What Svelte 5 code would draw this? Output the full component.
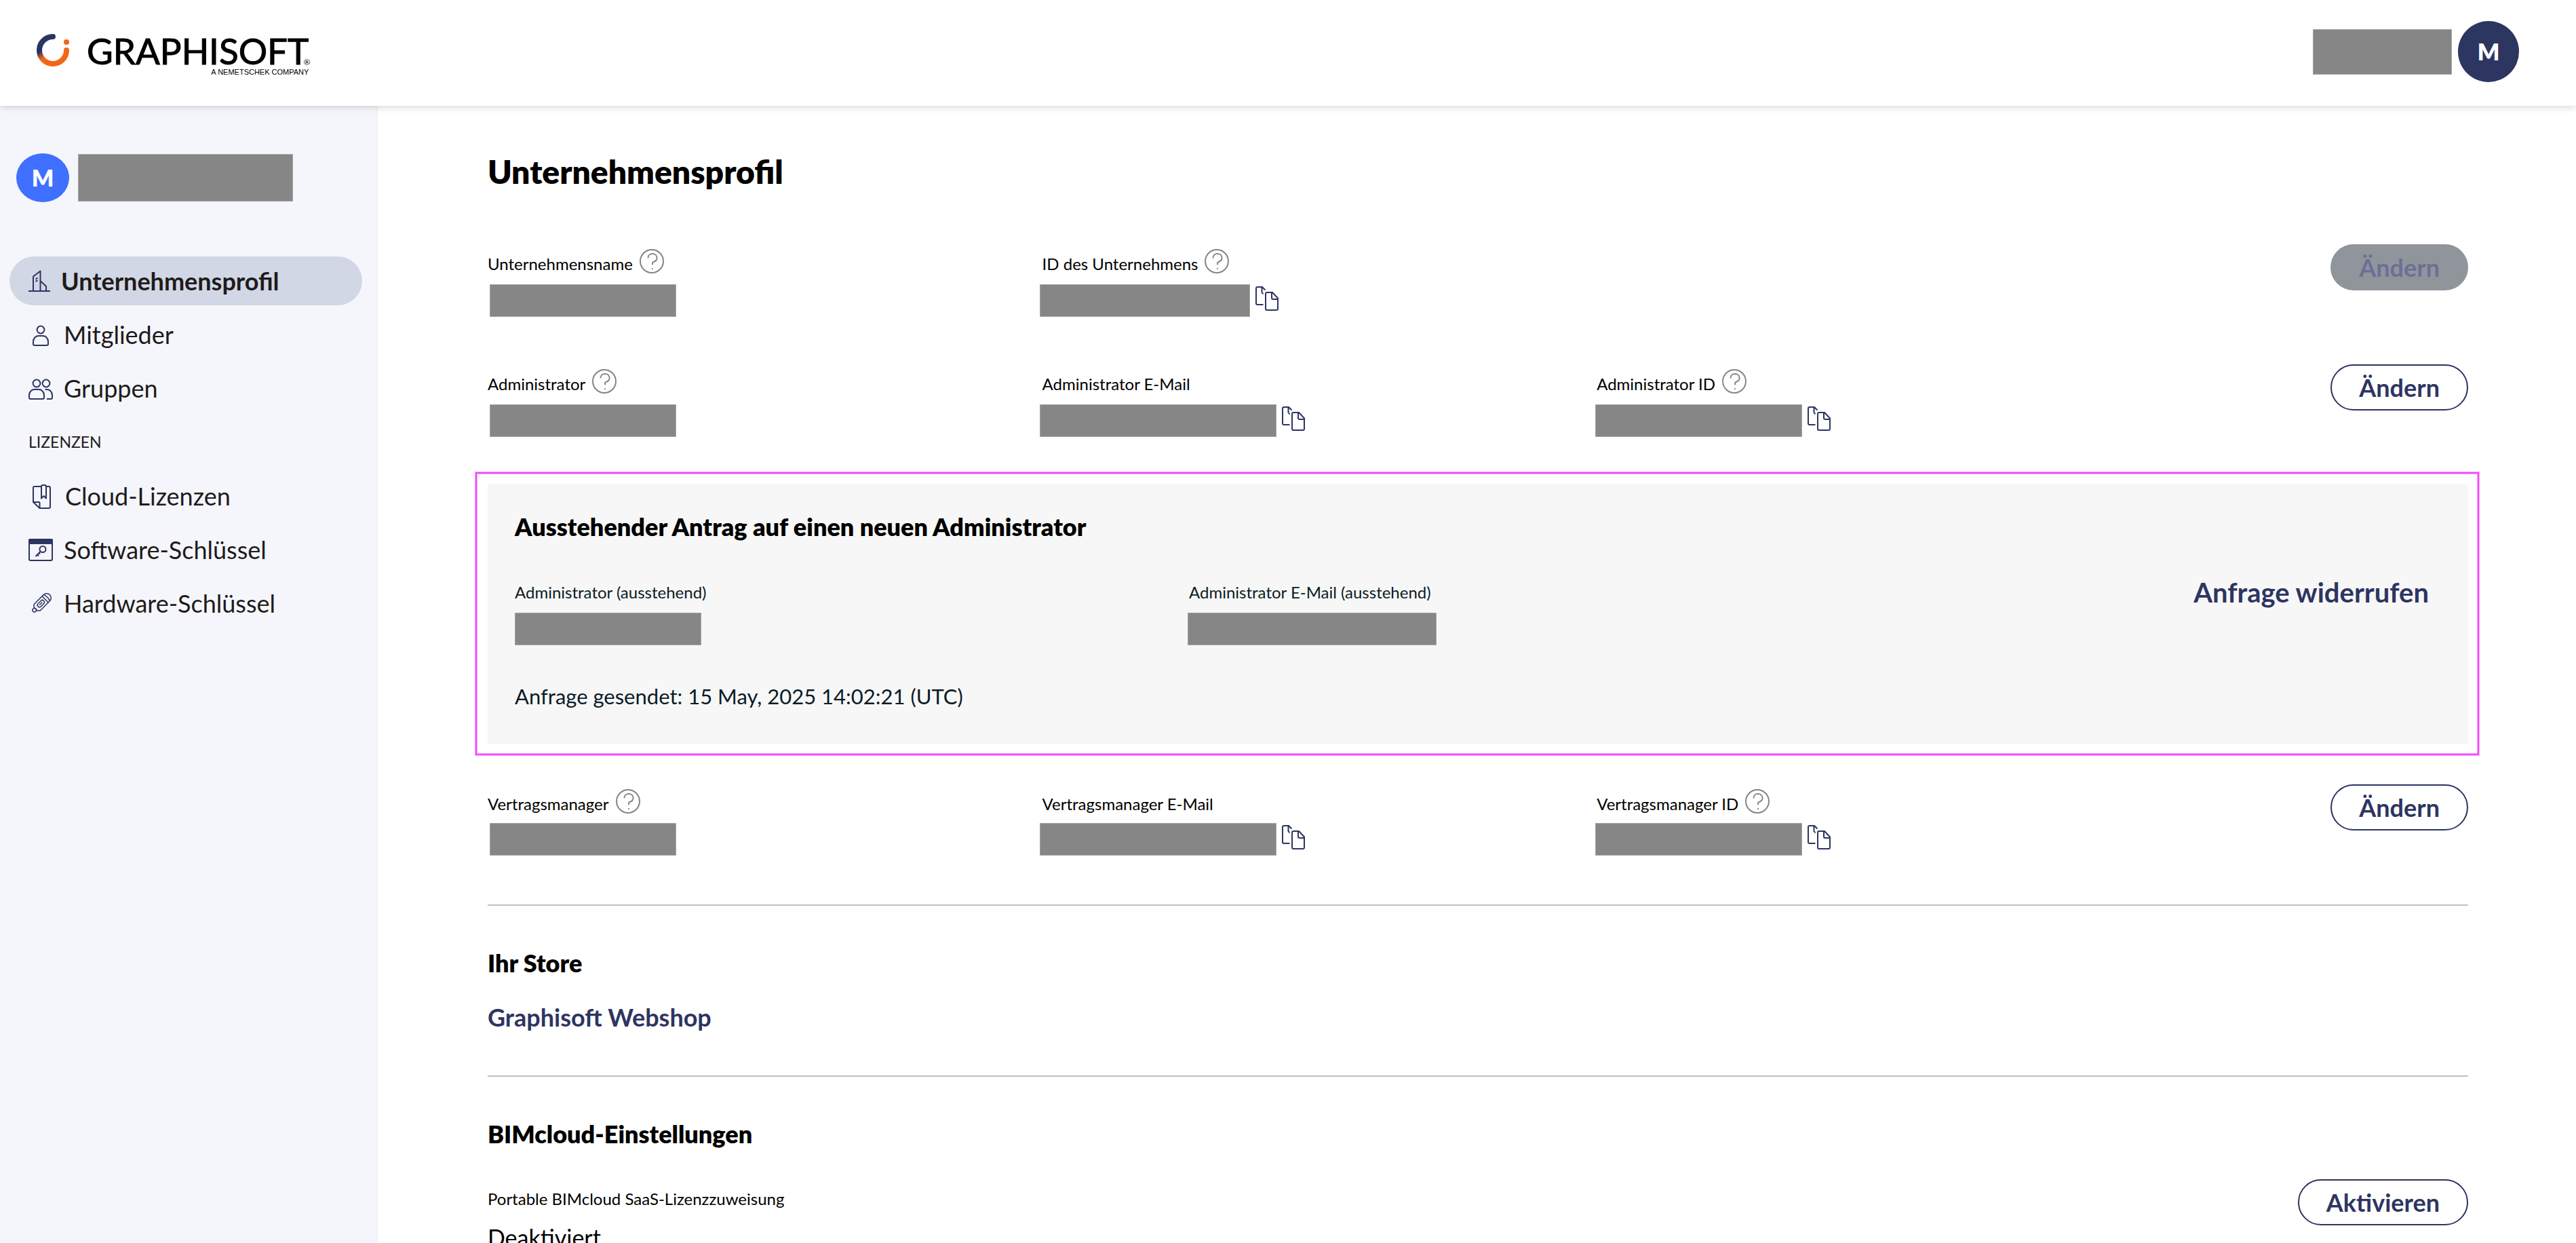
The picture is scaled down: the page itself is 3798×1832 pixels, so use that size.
<script>
  const company = [
    { label: 'Unternehmensname', help: true, width: 275 },
    { label: 'ID des Unternehmens', help: true, width: 310, copy: true }
  ];
  const admin = [
    { label: 'Administrator', help: true, width: 275 },
    { label: 'Administrator E-Mail', width: 349, copy: true },
    { label: 'Administrator ID', help: true, width: 305, copy: true }
  ];
  const manager = [
    { label: 'Vertragsmanager', help: true, width: 275 },
    { label: 'Vertragsmanager E-Mail', width: 349, copy: true },
    { label: 'Vertragsmanager ID', help: true, width: 305, copy: true }
  ];
  const pending = [
    { label: 'Administrator (ausstehend)', width: 275 },
    { label: 'Administrator E-Mail (ausstehend)', width: 367 }
  ];
</script>

{#snippet field(f)}
  <div class="field">
    <div class="label">
      <span>{f.label}</span>
      {#if f.help}
        <button class="icon-btn" type="button" aria-label="Hilfe">
          <svg class="help" width="36" height="36" viewBox="0 0 36 36">
            <circle cx="18" cy="18" r="17" />
            <path d="M12.4 13.4C12.4 9.6 15.2 7 19 7s6.6 2.600 6.600 6.200c0 3.600-2.400 4.800-4.600 5.600-1.400.500-2 1.200-2 2.500v2" />
            <path d="M19 28v1.800" />
          </svg>
        </button>
      {/if}
    </div>
    <div class="value">
      <span class="bar" style="width: {f.width}px"></span>
      {#if f.copy}
        <button class="icon-btn copy" type="button" aria-label="Kopieren">
          <svg width="34" height="36" viewBox="0 0 34 36">
            <path d="M11.500 27H3a2 2 0 0 1-2-2V3a2 2 0 0 1 2-2h7l4.500 4.500M9.500 1v8l2 2.500" />
            <path d="M17 9h8l8 8.500V33a2 2 0 0 1-2 2H17a2 2 0 0 1-2-2V11a2 2 0 0 1 2-2zM24 9v8a2 2 0 0 0 2 2h7" />
          </svg>
        </button>
      {/if}
    </div>
  </div>
{/snippet}

<div class="app">
  <header>
    <a class="logo" href="#home" aria-label="Graphisoft">
      <svg width="48" height="48" viewBox="0 0 48 48">
        <defs>
          <linearGradient id="ring" gradientUnits="userSpaceOnUse" x1="4" y1="16" x2="16" y2="38">
            <stop offset="0" stop-color="#2d3561" />
            <stop offset="0.35" stop-color="#1f3069" />
            <stop offset="0.8" stop-color="#f26717" />
          </linearGradient>
        </defs>
        <path d="M24 4A20 20 0 1 0 44 24" fill="none" stroke="url(#ring)" stroke-width="8" stroke-linecap="round" />
        <circle cx="44" cy="12" r="4" fill="#f26717" />
      </svg>
      <span class="words">
        <span class="wordmark">GRAPHISOFT<span class="reg">®</span></span>
        <span class="tagline">A NEMETSCHEK COMPANY</span>
      </span>
    </a>
    <div class="account">
      <span class="bar account-name"></span>
      <button class="avatar" type="button">M</button>
    </div>
  </header>

  <div class="body">
    <aside>
      <div class="team">
        <span class="avatar small">M</span>
        <span class="bar team-name"></span>
      </div>
      <nav>
        <a class="active" href="#profil">
          <svg width="32" height="32" viewBox="0 0 32 32">
            <path d="M0 31h32M7 31V9.500L17.500 1.500V31M17.500 16l8.500 8v7M10.500 13.500l3-2M10.500 17l3-2" />
          </svg>
          Unternehmensprofil
        </a>
        <a href="#mitglieder">
          <svg width="36" height="36" viewBox="0 0 36 36">
            <circle cx="18" cy="11" r="5.400" />
            <path d="M7 28.500C7 23 11 20 15 20h6c4 0 8 3 8 8.500V32a2 2 0 0 1-2 2H9a2 2 0 0 1-2-2z" />
          </svg>
          Mitglieder
        </a>
        <a href="#gruppen">
          <svg width="36" height="36" viewBox="0 0 36 36">
            <circle cx="12" cy="11" r="5.400" />
            <circle cx="26" cy="11" r="5.400" />
            <path d="M1 28.500C1 23 5 20 9 20h6c4 0 8 3 8 8.500V32a2 2 0 0 1-2 2H3a2 2 0 0 1-2-2z" />
            <path d="M24.500 20h2.500c4 0 8 3 8 8.500V32a2 2 0 0 1-2 2h-6" />
          </svg>
          Gruppen
        </a>
        <h2>LIZENZEN</h2>
        <a href="#cloud">
          <svg width="38" height="38" viewBox="0 0 38 38">
            <path d="M19 5H9a2 2 0 0 0-2 2v21l9.500 9H30a2 2 0 0 0 2-2V7a2 2 0 0 0-2-2h-4" />
            <path d="M7 28h8.500a1 1 0 0 1 1 1v8M19 22.500V5a2 2 0 0 1 2-2h3a2 2 0 0 1 2 2v17.500l-3.500-3.500z" />
          </svg>
          Cloud-Lizenzen
        </a>
        <a href="#software">
          <svg width="36" height="36" viewBox="0 0 36 36">
            <rect x="1" y="3" width="34" height="31" rx="2" />
            <path d="M1 3.500h34V9H1z" fill="#2d3561" />
            <circle cx="21" cy="17.500" r="4.500" />
            <path d="M17.500 21L10.500 28M13 25.500l2 2M15.500 23l1.500 1.500" />
          </svg>
          Software-Schlüssel
        </a>
        <a href="#hardware">
          <svg class="fine" width="36" height="36" viewBox="0 0 36 36">
            <g transform="translate(19 18) rotate(-45)">
              <path d="M-12-3.500L-9-6.500H11a6.500 6.500 0 0 1 0 13H-9l-3-3zM8-6.500V6.500M11-6.500C13-3 13 3 11 6.500" />
              <rect x="-7" y="-3" width="12" height="6" rx="3" />
              <path d="M-4 0H2" />
              <circle cx="-14.500" cy="0" r="2.800" />
            </g>
          </svg>
          Hardware-Schlüssel
        </a>
      </nav>
    </aside>

    <main>
      <h1>Unternehmensprofil</h1>

      <section class="row first">
        {#each company as f}{@render field(f)}{/each}
        <button class="pill" type="button" disabled>Ändern</button>
      </section>

      <section class="row second">
        {#each admin as f}{@render field(f)}{/each}
        <button class="pill" type="button">Ändern</button>
      </section>

      <div class="highlight">
        <section class="panel">
          <h2>Ausstehender Antrag auf einen neuen Administrator</h2>
          <div class="pending">
            {#each pending as f}{@render field(f)}{/each}
            <button class="revoke" type="button">Anfrage widerrufen</button>
          </div>
          <p>Anfrage gesendet: 15 May, 2025 14:02:21 (UTC)</p>
        </section>
      </div>

      <section class="row third">
        {#each manager as f}{@render field(f)}{/each}
        <button class="pill" type="button">Ändern</button>
      </section>

      <section class="block">
        <h2>Ihr Store</h2>
        <a class="shop" href="#webshop">Graphisoft Webshop</a>
      </section>

      <section class="block">
        <h2>BIMcloud-Einstellungen</h2>
        <div class="row cloud">
          <div class="setting">
            <div class="label"><span>Portable BIMcloud SaaS-Lizenzzuweisung</span></div>
            <div class="status">Deaktiviert</div>
          </div>
          <button class="pill" type="button">Aktivieren</button>
        </div>
      </section>
    </main>
  </div>
</div>

<style>
  :global(body) {
    background: #fff;
  }
  .app {
    display: flex;
    flex-direction: column;
    height: 100vh;
    overflow: hidden;
    font-family: Lato, Roboto, sans-serif;
    font-size: 36px;
    line-height: 44px;
    color: #000;
  }
  h1, h2, p {
    margin: 0;
  }
  button {
    font: inherit;
    cursor: pointer;
  }
  a {
    color: inherit;
    text-decoration: none;
  }
  svg {
    flex: none;
    display: block;
    fill: none;
    stroke: #2d3561;
    stroke-width: 2;
    stroke-linejoin: round;
  }
  .fine {
    stroke-width: 1.5;
  }
  .bar {
    box-sizing: border-box;
    flex: none;
    height: 48px;
    background: #868686;
    border: 1px solid #a4a4a4;
  }

  header {
    position: relative;
    z-index: 1;
    box-sizing: border-box;
    flex: none;
    display: flex;
    align-items: center;
    justify-content: space-between;
    height: 156px;
    padding: 0 84px 4px 54px;
    background: #fff;
    box-shadow: 0 2px 10px rgba(0, 0, 0, 0.16);
  }
  .logo {
    align-self: flex-start;
    display: flex;
    gap: 26px;
    margin-top: 50px;
  }
  .logo svg {
    overflow: visible;
    stroke: none;
  }
  .words {
    display: flex;
    flex-direction: column;
    align-items: flex-end;
    padding-top: 2px;
  }
  .wordmark {
    position: relative;
    font-size: 53px;
    line-height: 46px;
    margin-bottom: 1px;
    -webkit-text-stroke: 1px #000;
  }
  .reg {
    position: absolute;
    right: -2px;
    bottom: 0;
    font-size: 12px;
    line-height: 12px;
    -webkit-text-stroke: 0;
  }
  .tagline {
    font-family: "Liberation Sans", sans-serif;
    font-size: 11px;
    line-height: 14px;
  }
  .account {
    display: flex;
    align-items: center;
    gap: 9px;
  }
  .account-name {
    width: 205px;
    height: 67px;
  }
  .avatar {
    display: flex;
    align-items: center;
    justify-content: center;
    width: 90px;
    height: 90px;
    padding: 0;
    border: 0;
    border-radius: 50%;
    background: #2d3561;
    color: #fff;
    font-size: 34px;
    font-weight: 800;
  }
  .avatar.small {
    width: 78px;
    height: 72px;
    background: #3f70ff;
  }

  .body {
    flex: 1;
    min-height: 0;
    display: flex;
  }
  aside {
    box-sizing: border-box;
    flex: none;
    width: 555px;
    padding: 70px 21px 0 14px;
    background: #f4f6fb;
    box-shadow: 0 0 4px rgba(0, 0, 0, 0.16);
    color: #1f1b1b;
  }
  .team {
    display: flex;
    align-items: center;
    gap: 13px;
    padding-left: 10px;
    margin-bottom: 80px;
  }
  .team-name {
    width: 317px;
    height: 70px;
  }
  nav {
    display: flex;
    flex-direction: column;
    gap: 7px;
  }
  nav a {
    display: flex;
    align-items: center;
    gap: 16px;
    height: 72px;
    padding-left: 28px;
    border-radius: 36px;
  }
  nav .active {
    background: #d1d7e5;
    font-weight: 700;
  }
  nav h2 {
    padding-left: 28px;
    font-size: 23px;
    font-weight: 400;
    line-height: 73px;
  }

  main {
    flex: 1;
    min-width: 0;
    overflow-y: auto;
    scrollbar-width: none;
    padding: 68px 159px 0 164px;
  }
  h1 {
    font-size: 48px;
    line-height: 58px;
    font-weight: 800;
  }
  main h2 {
    font-size: 36px;
    line-height: 46px;
    font-weight: 800;
  }
  .row {
    display: flex;
    align-items: flex-start;
  }
  .row .field {
    flex: 0 0 28%;
    padding-top: 7px;
  }
  .first {
    margin-top: 78px;
  }
  .second {
    margin-top: 70px;
  }
  .third {
    margin-top: 43px;
  }
  .label {
    display: flex;
    align-items: flex-start;
    gap: 10px;
    font-size: 24px;
  }
  .icon-btn {
    padding: 0;
    border: 0;
    background: none;
  }
  .help {
    stroke: #858585;
  }
  .value {
    display: flex;
    align-items: flex-start;
    gap: 8px;
    margin-top: 8px;
  }
  .third .value {
    margin-top: 6px;
  }
  .row .field:first-child .value {
    padding-left: 3px;
  }
  .row .field:nth-child(2) .value {
    margin-left: -4px;
  }
  .field:nth-child(3) .value,
  .pending .field:nth-child(2) .value {
    margin-left: -2px;
  }
  .copy {
    margin-top: 3px;
  }
  .pill {
    box-sizing: border-box;
    height: 68px;
    margin-left: auto;
    padding: 0 40px;
    border: 2px solid #2d3561;
    border-radius: 34px;
    background: #fff;
    color: #2d3561;
    font-weight: 700;
  }
  .pill:disabled {
    border-color: #90959c;
    background: #90959c;
    color: #6b7096;
  }

  .highlight {
    margin: 52px -16px 0 -18px;
    padding: 15px 14px 14px 16px;
    border: 2px solid #f04bff;
    box-shadow: 0 0 0 1px #f7a5ff, inset 0 0 0 1px #f7a5ff;
  }
  .panel {
    padding: 40px 40px 49px;
    background: #f7f7f7;
  }
  .pending {
    display: flex;
    align-items: flex-start;
    margin-top: 52px;
    color: #0b1c26;
  }
  .pending .field {
    flex: 0 0 35%;
  }
  .revoke {
    margin-left: auto;
    padding: 0 18px;
    border: 0;
    background: none;
    color: #2d3561;
    font-size: 40px;
    font-weight: 700;
  }
  .panel p {
    margin-top: 53px;
    font-size: 31px;
    color: #0b1c26;
  }

  .block {
    margin-top: 64px;
    padding-top: 61px;
    border-top: 2px solid #c1c1c1;
  }
  .third + .block {
    margin-top: 72px;
  }
  .shop {
    display: block;
    margin-top: 35px;
    color: #2d3561;
    font-weight: 700;
  }
  .cloud {
    margin-top: 44px;
  }
  .setting {
    padding-top: 7px;
  }
  .status {
    margin-top: 13px;
    font-size: 34px;
  }
</style>
